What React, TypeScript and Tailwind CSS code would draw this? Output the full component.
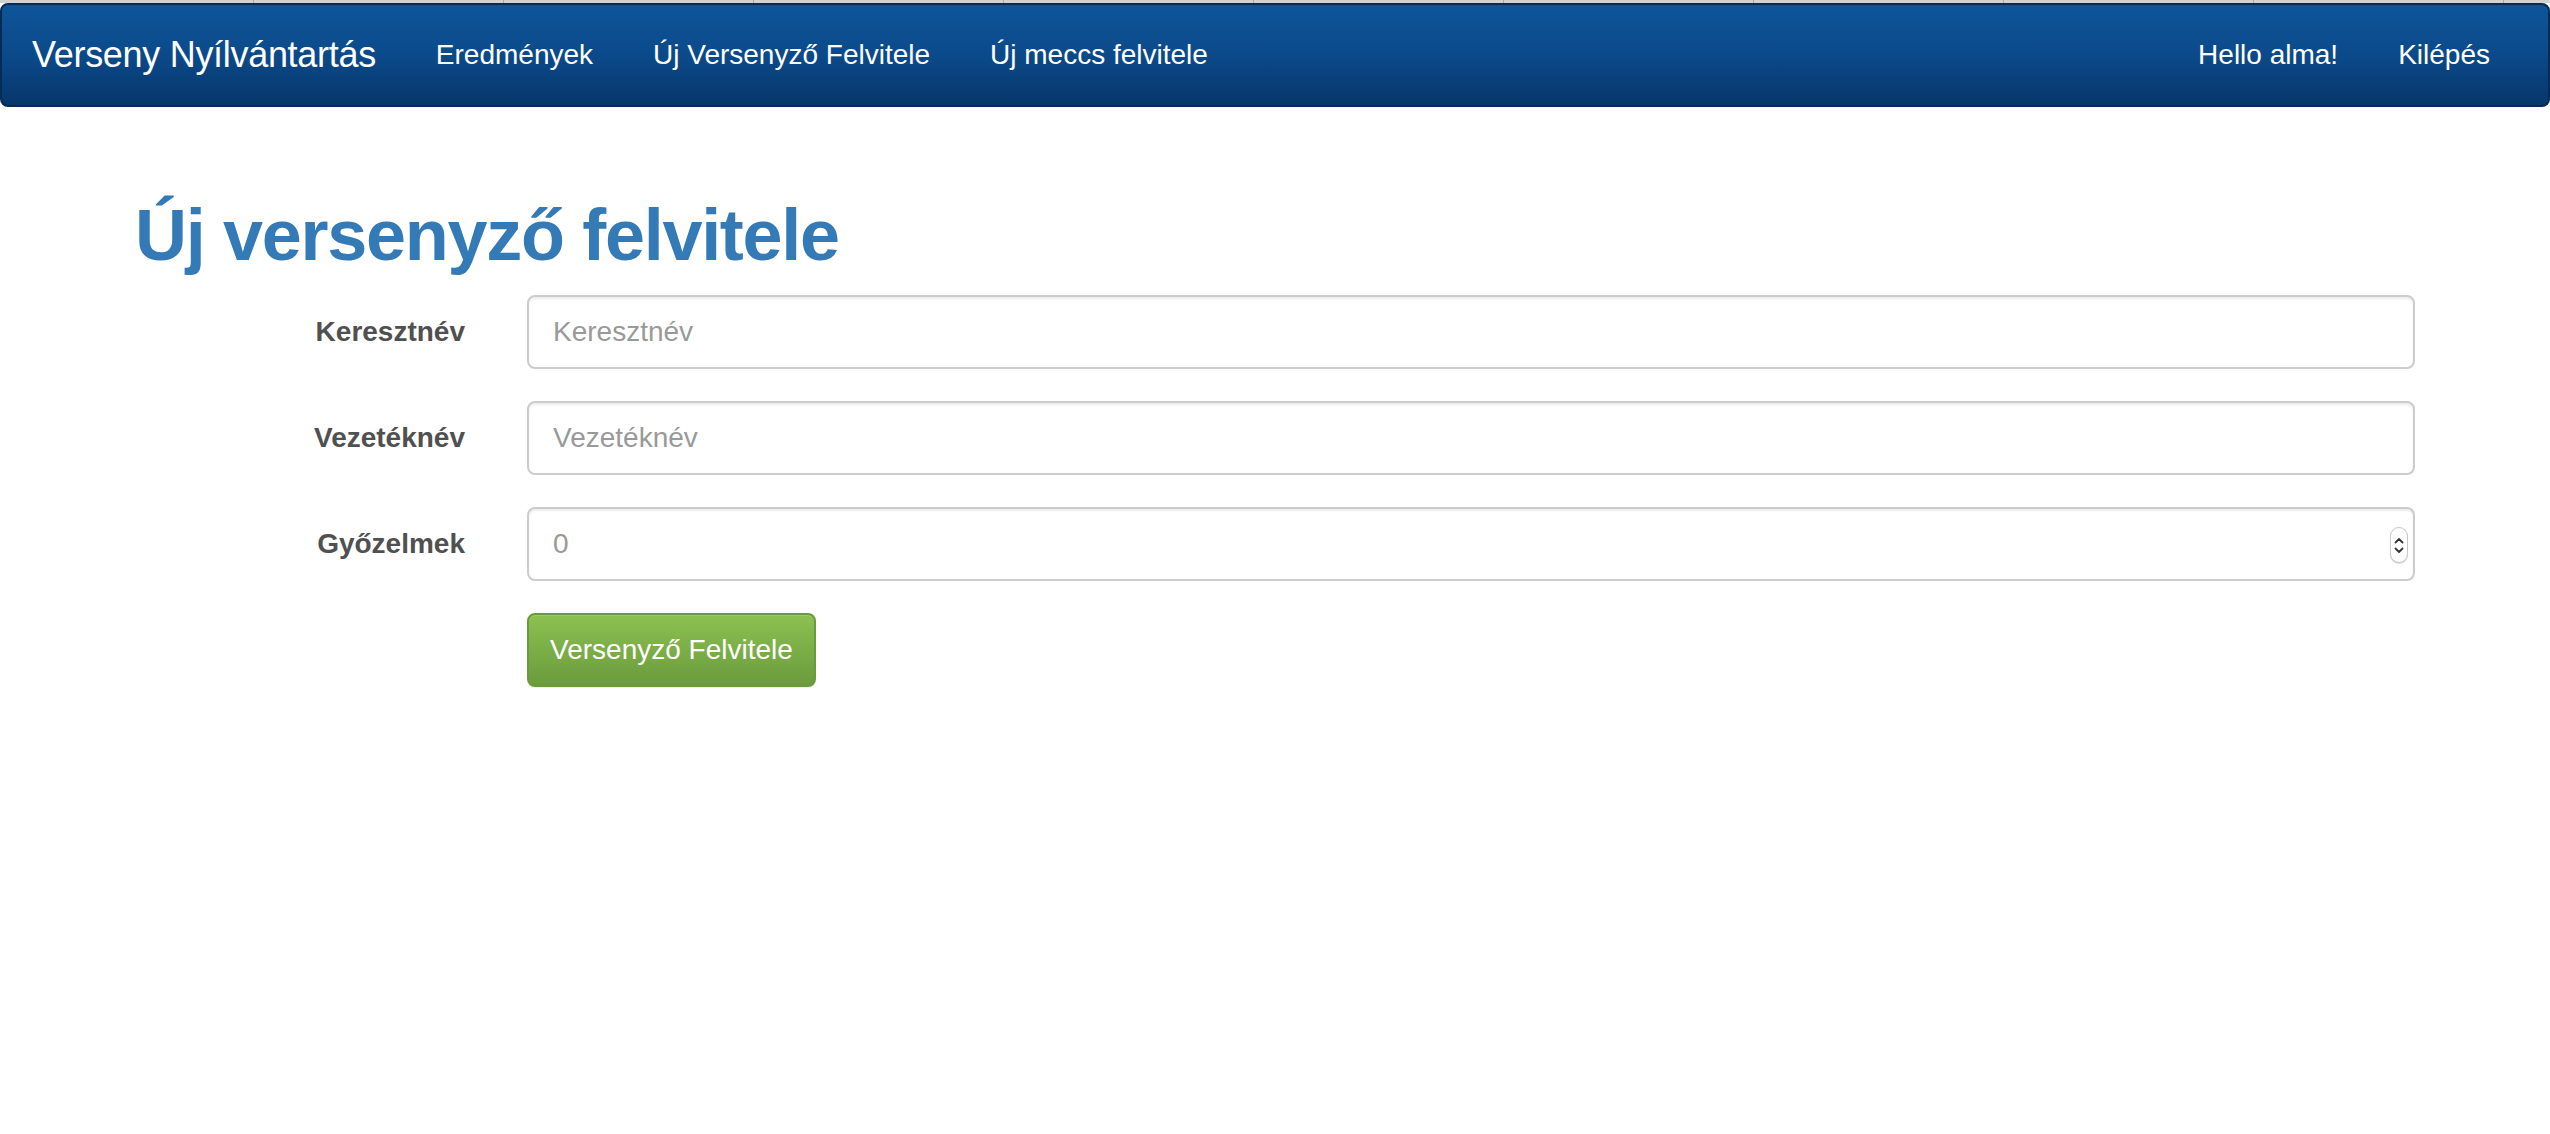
import React from "react";

const tabs = Array.from({ length: 10 }, (_, i) => i);

function Row({ label, placeholder, spinner }: { label: string; placeholder: string; spinner?: boolean }) {
  return (
    <div className="flex items-center h-[74px] mb-[32px]">
      <label className="w-[330px] shrink-0 text-right font-bold text-[28px] text-[#505050] leading-none">
        {label}
      </label>
      <div className="relative ml-[62px] flex-1 h-[74px]">
        <input
          type="text"
          placeholder={placeholder}
          className="w-full h-full border-2 border-[#cccccc] rounded-[8px] px-[24px] text-[28px] text-[#555] placeholder:text-[#999999] bg-white shadow-[inset_0_2px_2px_rgba(0,0,0,0.075)] outline-none font-['Liberation_Sans',Arial,sans-serif]"
        />
        {spinner && (
          <div className="absolute right-[7px] top-[20px] w-[18px] h-[36px] rounded-full border border-[#c8c8c8] bg-white shadow-[0_1px_1px_rgba(0,0,0,0.15)] flex flex-col items-center justify-center gap-[3px]">
            <svg width="10" height="7" viewBox="0 0 10 7" fill="none">
              <path d="M1.5 5.5 L5 2 L8.5 5.5" stroke="#333" strokeWidth="1.8" strokeLinecap="round" strokeLinejoin="round" />
            </svg>
            <svg width="10" height="7" viewBox="0 0 10 7" fill="none">
              <path d="M1.5 1.5 L5 5 L8.5 1.5" stroke="#333" strokeWidth="1.8" strokeLinecap="round" strokeLinejoin="round" />
            </svg>
          </div>
        )}
      </div>
    </div>
  );
}

export default function App() {
  return (
    <div className="min-h-screen bg-white font-['Liberation_Sans',Arial,sans-serif]">
      <div className="h-[3px] flex bg-[#d2d2d2] overflow-hidden">
        <div className="w-[254px] shrink-0 border-r border-[#a9a9a9]" />
        {tabs.map((t) => (
          <div key={t} className="w-[250px] shrink-0 border-r border-[#a9a9a9]" />
        ))}
      </div>
      <nav className="h-[104px] rounded-[8px] border-2 border-[#062c55] bg-gradient-to-b from-[#0d5599] via-[#0b4a8a] to-[#07366a] flex items-center text-white">
        <span className="pl-[30px] pr-[30px] text-[36px] leading-none tracking-[-0.3px]">Verseny Nyílvántartás</span>
        <span className="px-[30px] text-[28px] leading-none">Eredmények</span>
        <span className="px-[30px] text-[28px] leading-none">Új Versenyző Felvitele</span>
        <span className="px-[30px] text-[28px] leading-none">Új meccs felvitele</span>
        <div className="ml-auto flex items-center pr-[28px]">
          <span className="px-[30px] text-[28px] leading-none">Hello alma!</span>
          <span className="px-[30px] text-[28px] leading-none">Kilépés</span>
        </div>
      </nav>
      <main className="w-[2340px] mx-auto px-[30px]">
        <h1 className="mt-[89px] mb-[20px] text-[72px] leading-[79px] font-bold tracking-[-1.3px] text-[#337ab7]">
          Új versenyző felvitele
        </h1>
        <form>
          <Row label="Keresztnév" placeholder="Keresztnév" />
          <Row label="Vezetéknév" placeholder="Vezetéknév" />
          <Row label="Győzelmek" placeholder="0" spinner />
          <div className="ml-[392px]">
            <button
              type="button"
              className="w-[289px] h-[74px] rounded-[8px] border-2 border-[#6a9a3e] bg-gradient-to-b from-[#8cc152] to-[#6b9b3d] text-white text-[28px] leading-none shadow-[inset_0_1px_0_rgba(255,255,255,0.15),0_1px_1px_rgba(0,0,0,0.075)] font-['Liberation_Sans',Arial,sans-serif]"
            >
              Versenyző Felvitele
            </button>
          </div>
        </form>
      </main>
    </div>
  );
}
